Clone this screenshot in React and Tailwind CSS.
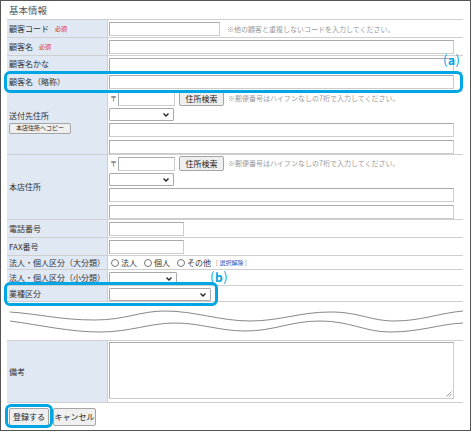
import React from 'react';

const jp = "font-['Noto_Sans_CJK_JP',sans-serif]";

function Input({ w = 'w-[345px]', className = '' }) {
  return <div className={`${w} h-[14px] shrink-0 border border-[#aaa] border-r-[#ccc] border-b-[#ccc] bg-white ${className}`} />;
}

function Select({ w }) {
  return (
    <div className={`${w} h-[13px] border border-[#aaa] bg-white flex items-center justify-end pr-[4px] rounded-[1px]`}>
      <svg width="6" height="4" viewBox="0 0 6 4">
        <path d="M0.5 0.5 L3 3 L5.5 0.5" fill="none" stroke="#222" strokeWidth="1.3" />
      </svg>
    </div>
  );
}

function Btn({ children, className }) {
  return (
    <div className={`border border-[#a5a5a5] bg-[#efefef] rounded-[2px] flex items-center justify-center whitespace-nowrap text-[#222] leading-none ${className}`}>
      {children}
    </div>
  );
}

function Note({ children, className = '' }) {
  return <span className={`text-[7px] leading-none text-[#9a9a9a] whitespace-nowrap ${className}`}>{children}</span>;
}

function Row({ label, h, children, top = 'items-start pt-[2px]' }) {
  return (
    <div className={`flex border-b border-[#cfcfcf] ${h}`}>
      <div className="w-[101px] shrink-0 bg-[#dfe8f3] border-r border-[#cfcfcf] pl-[2px] flex items-center text-[8px] leading-none text-[#333] whitespace-nowrap">
        {label}
      </div>
      <div className={`flex-1 pl-[1px] flex leading-none ${top}`}>{children}</div>
    </div>
  );
}

function Required() {
  return <span className="ml-[6px] text-[6px] text-[#e02020]">必須</span>;
}

function Zip() {
  return (
    <div className="flex items-center h-[15px] leading-none">
      <span className="text-[7px] text-[#444] w-[8px] ml-[1px]">〒</span>
      <Input w="w-[57px]" />
      <Btn className="ml-[4px] w-[45px] h-[15px] text-[8px]">住所検索</Btn>
      <Note className="ml-[4px]">※郵便番号はハイフンなしの7桁で入力してください。</Note>
    </div>
  );
}

function Address() {
  return (
    <div className="flex flex-col">
      <Zip />
      <div className="mt-[2px]"><Select w="w-[65px]" /></div>
      <Input className="mt-[2px]" />
      <Input className="mt-[3px]" />
    </div>
  );
}

function Radio({ label }) {
  return (
    <span className="flex items-center mr-[7px]">
      <span className="w-[8px] h-[8px] rounded-full border border-[#777] bg-white mr-[2px]" />
      <span className="text-[8px] text-[#333]">{label}</span>
    </span>
  );
}

function Marker({ children, className }) {
  return (
    <div className={`absolute flex items-center text-[#00a6e4] ${className}`}>
      <span className="text-[13px] leading-none">(</span>
      <span className="text-[12px] font-bold leading-none mx-[0.5px]">{children}</span>
      <span className="text-[13px] leading-none">)</span>
    </div>
  );
}

export default function App() {
  return (
    <div className={`relative w-[471px] h-[431px] border border-[#555] bg-white overflow-hidden ${jp}`}>
      <div className="pl-[8px] pt-[5px] h-[18px] text-[9.5px] leading-none text-[#555]">基本情報</div>

      <div className="ml-[6px] w-[456px] border-t border-[#cfcfcf]">
        <Row label={<>顧客コード<Required /></>} h="h-[18px]">
          <div className="flex items-center">
            <Input w="w-[111px]" />
            <Note className="ml-[7px]">※他の顧客と重複しないコードを入力してください。</Note>
          </div>
        </Row>
        <Row label={<>顧客名<Required /></>} h="h-[18px]"><Input /></Row>
        <Row label="顧客名かな" h="h-[17px]"><Input /></Row>
        <Row label="顧客名（略称）" h="h-[18px]"><Input /></Row>
        <Row
          h="h-[64px]"
          top="items-start pt-[0px]"
          label={
            <div className="flex flex-col items-start">
              <span>送付先住所</span>
              <Btn className="mt-[3px] h-[11px] w-[62px] text-[6px]">本店住所へコピー</Btn>
            </div>
          }
        >
          <Address />
        </Row>
        <Row label="本店住所" h="h-[65px]" top="items-start pt-[1px]"><Address /></Row>
        <Row label="電話番号" h="h-[18px]"><Input w="w-[75px]" /></Row>
        <Row label="FAX番号" h="h-[18px]"><Input w="w-[75px]" /></Row>
        <Row label="法人・個人区分（大分類）" h="h-[14px]" top="items-center pl-[3px]">
          <Radio label="法人" />
          <Radio label="個人" />
          <Radio label="その他" />
          <span className="text-[6px] text-[#888] ml-[-2px] whitespace-nowrap">[ <span className="text-[#2a56b8]">選択解除</span> ]</span>
        </Row>
        <Row label="法人・個人区分（小分類）" h="h-[16px]" top="items-start pt-[2px]"><Select w="w-[68px]" /></Row>
        <Row label="業種区分" h="h-[16px]" top="items-start pt-[2px]"><Select w="w-[102px]" /></Row>
      </div>

      <svg className="block" width="469" height="38" viewBox="1 301 469 38">
        <path d="M10,311 C40,313 60,319 95,319 C125,319 140,310 165,310 C195,310 220,320 250,320 C280,320 300,311 330,311 C360,311 370,320 395,320 C420,320 440,312 463,310" fill="none" stroke="#888" strokeWidth="1" />
        <path d="M10,320 C40,324 70,331 100,331 C130,331 150,322 175,322 C200,322 220,330 245,330 C275,330 290,320 320,320 C350,320 365,331 390,331 C420,331 440,323 463,322" fill="none" stroke="#888" strokeWidth="1" />
      </svg>

      <div className="ml-[6px] w-[456px] border-t border-[#cfcfcf]">
        <Row label="備考" h="h-[62px]" top="items-start pt-[1px]">
          <div className="relative w-[345px] h-[57px] border border-[#aaa] border-r-[#ccc] border-b-[#ccc] bg-white">
            <svg className="absolute right-[1px] bottom-[1px]" width="6" height="6" viewBox="0 0 6 6">
              <path d="M5.5 0.5 L0.5 5.5 M5.5 3 L3 5.5" stroke="#888" strokeWidth="0.8" />
            </svg>
          </div>
        </Row>
      </div>

      <div className="flex gap-[4px] ml-[8px] mt-[5px]">
        <Btn className="h-[18px] w-[40px] text-[8px]">登録する</Btn>
        <Btn className="h-[18px] w-[43px] text-[8px]">キャンセル</Btn>
      </div>

      <div className="absolute left-[3px] top-[70px] w-[459px] h-[22px] border-[3px] border-[#00a6e4] rounded-[6px]" />
      <Marker className="left-[442px] top-[52px]">a</Marker>
      <div className="absolute left-[3px] top-[281px] w-[214px] h-[24px] border-[3px] border-[#00a6e4] rounded-[6px]" />
      <Marker className="left-[209px] top-[269px]">b</Marker>
      <div className="absolute left-[4px] top-[403px] w-[48px] h-[24px] border-[3px] border-[#00a6e4] rounded-[6px]" />
    </div>
  );
}
